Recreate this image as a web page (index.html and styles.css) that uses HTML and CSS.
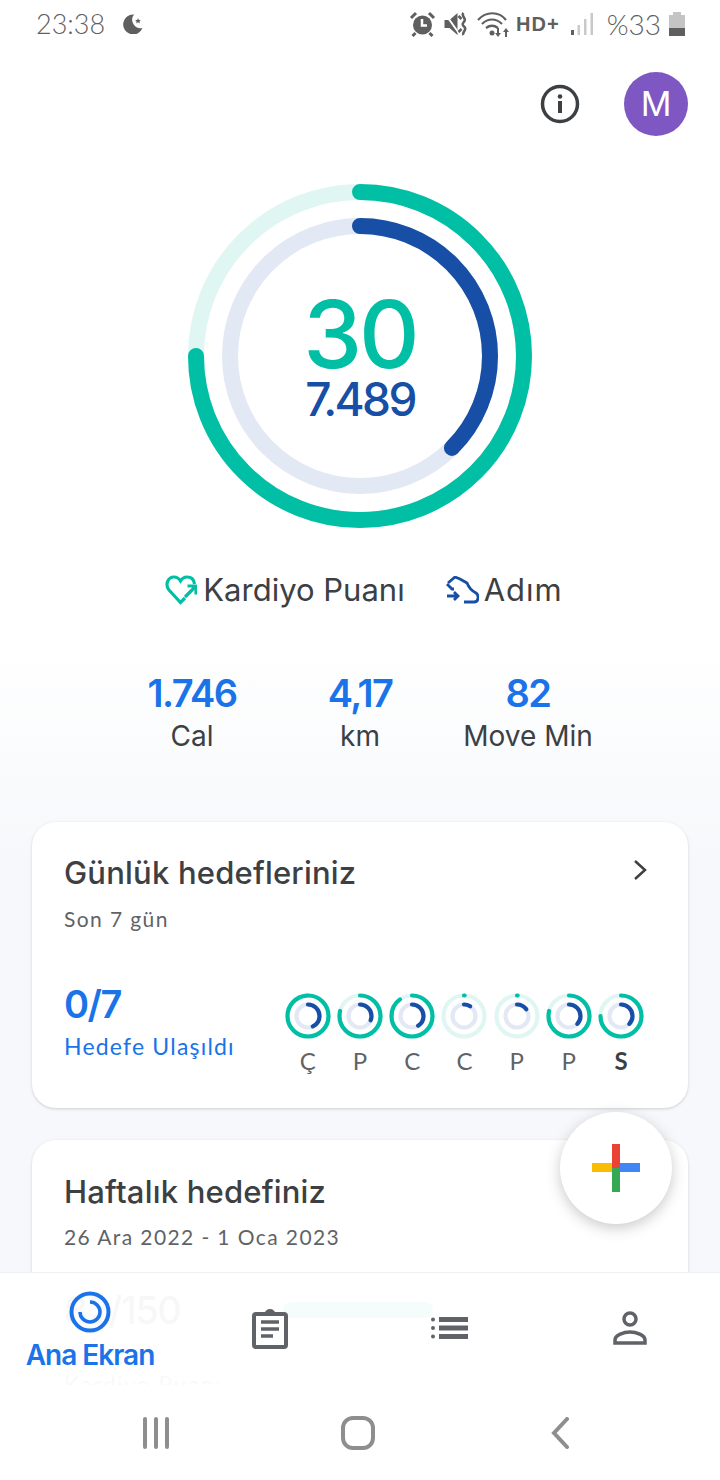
FILE: index.html
```html
<!DOCTYPE html>
<html lang="tr">
<head>
<meta charset="utf-8">
<title>Ana Ekran</title>
<link rel="stylesheet" href="styles.css">
</head>
<body>
<div class="phone">
  <header class="status">
    <div class="status-left">
      <span class="clock">23:38</span>
      <svg class="moon" viewBox="0 0 20 20"><path d="M11 .5A10 10 0 1 0 19.500 14A8.500 8.500 0 0 1 11 .5z"/><path d="M15 4l.9 1.900 2 .2-1.500 1.300.5 2-1.900-1.100-1.800 1.100.4-2-1.500-1.300 2.100-.2z"/></svg>
    </div>
    <div class="status-right">
      <svg class="st-alarm" viewBox="0 0 26 26"><circle cx="13" cy="14" r="9.500"/><path class="cut" d="M12.500 8v6.500h5"/><path class="ear" d="M1.500 7l5-5M24.500 7l-5-5M6 22l-3 3M20 22l3 3"/></svg>
      <svg class="st-mute" viewBox="0 0 26 24"><path d="M1 8h5l8-7v22l-8-7H1z"/><path class="cut" d="M1 1l15 21"/><path class="wave" d="M20 1c-3 3 3 5 1 8s-3 3 0 6-3 5-1 8"/><path class="wave" d="M15 4l3 3M15 20l3-3"/></svg>
      <svg class="st-wifi" viewBox="0 0 32 26"><path class="wave" d="M1 9c8-9 21-9 28 0M5 13c6-6 14-6 20 0M9 17c4-3 8-3 12 0"/><circle cx="15" cy="22" r="2.500"/><path d="M20 17h2v5h2l-3 4-3-4h2zM28 26h2v-5h2l-3-4-3 4h2z"/></svg>
      <span class="hd">HD+</span>
      <svg class="st-signal" viewBox="0 0 22 22"><rect class="on" x="0" y="17" width="3" height="5"/><rect x="6.500" y="12" width="2.500" height="10"/><rect x="13" y="6" width="2.500" height="16"/><rect x="19.500" y="0" width="2.500" height="22"/></svg>
      <span class="pct">%33</span>
      <svg class="st-batt" viewBox="0 0 16 24"><rect class="b-top" x="4" y="0" width="8" height="3"/><rect class="b-body" x="0" y="3" width="16" height="21"/><rect x="0" y="16" width="16" height="8"/></svg>
    </div>
  </header>

  <div class="actions">
    <svg class="info" viewBox="0 0 40 40"><circle class="info-ring" cx="20" cy="20" r="17.500"/><circle cx="20" cy="12.500" r="2.300"/><rect x="18" y="17" width="4" height="12"/></svg>
    <div class="avatar">M</div>
  </div>

  <div class="ring">
    <svg class="ring-svg" viewBox="0 0 344 344">
      <circle class="track-teal" cx="172" cy="172" r="164"/>
      <circle class="track-blue" cx="172" cy="172" r="130"/>
      <circle class="arc-teal" cx="172" cy="172" r="164" pathLength="100" stroke-dasharray="75 100"/>
      <circle class="arc-blue" cx="172" cy="172" r="130" pathLength="100" stroke-dasharray="37.500 100"/>
    </svg>
    <div class="ring-text">
      <div class="ring-main">30</div>
      <div class="ring-sub">7.489</div>
    </div>
  </div>

  <div class="legend">
    <div class="legend-item">
      <svg class="leg-heart" viewBox="0 0 32 30"><path d="M20 23L15.500 27.500 4 15C0 10 2.500 2 9 2c3 0 5 1.500 6.500 4C17 3.500 19 2 22 2c4 0 7 2.500 7.500 7"/><path d="M20 22l9.500-9.500M22.500 11h8.500v8.500"/></svg>
      <span>Kardiyo Puanı</span>
    </div>
    <div class="legend-item legend-steps">
      <svg class="leg-shoe" viewBox="0 0 33 28"><path d="M2 7L9 1l5 2 7 4c2 5 5 8 9 10 3 2 3 9-2 9H18"/><path d="M1 8l5 5h2"/><path d="M1 20h11M8 16l4 4-4 4"/></svg>
      <span class="steps">Adım</span>
    </div>
  </div>

  <div class="stats">
    <div class="stat"><div class="stat-num">1.746</div><div class="stat-label">Cal</div></div>
    <div class="stat"><div class="stat-num">4,17</div><div class="stat-label">km</div></div>
    <div class="stat"><div class="stat-num">82</div><div class="stat-label">Move Min</div></div>
  </div>

  <section class="card">
    <div class="card-head">
      <h2>Günlük hedefleriniz</h2>
      <svg class="chev" viewBox="0 0 14 22"><path d="M2 2l10 9-10 9"/></svg>
    </div>
    <p class="hand muted">Son 7 gün</p>
    <div class="daily">
      <div class="daily-score">
        <div class="score">0/7</div>
        <div class="hand blue">Hedefe Ulaşıldı</div>
      </div>
      <div class="week">
        <div class="day"><svg class="mini" viewBox="0 0 46 46"><circle class="mt" cx="23" cy="23" r="20.500"/><circle class="mb" cx="23" cy="23" r="11.500"/><circle class="ma" cx="23" cy="23" r="20.500" pathLength="100" stroke-dasharray="99 100"/><circle class="mc" cx="23" cy="23" r="11.500" pathLength="100" stroke-dasharray="43 100"/></svg><span>Ç</span></div>
        <div class="day"><svg class="mini" viewBox="0 0 46 46"><circle class="mt" cx="23" cy="23" r="20.500"/><circle class="mb" cx="23" cy="23" r="11.500"/><circle class="ma" cx="23" cy="23" r="20.500" pathLength="100" stroke-dasharray="79 100"/><circle class="mc" cx="23" cy="23" r="11.500" pathLength="100" stroke-dasharray="31 100"/></svg><span>P</span></div>
        <div class="day"><svg class="mini" viewBox="0 0 46 46"><circle class="mt" cx="23" cy="23" r="20.500"/><circle class="mb" cx="23" cy="23" r="11.500"/><circle class="ma" cx="23" cy="23" r="20.500" pathLength="100" stroke-dasharray="90 100"/><circle class="mc" cx="23" cy="23" r="11.500" pathLength="100" stroke-dasharray="41 100"/></svg><span>C</span></div>
        <div class="day"><svg class="mini" viewBox="0 0 46 46"><circle class="mt" cx="23" cy="23" r="20.500"/><circle class="mb" cx="23" cy="23" r="11.500"/><circle class="ma" cx="23" cy="23" r="20.500" pathLength="100" stroke-dasharray="0.500 100"/><circle class="mc" cx="23" cy="23" r="11.500" pathLength="100" stroke-dasharray="9 100"/></svg><span>C</span></div>
        <div class="day"><svg class="mini" viewBox="0 0 46 46"><circle class="mt" cx="23" cy="23" r="20.500"/><circle class="mb" cx="23" cy="23" r="11.500"/><circle class="ma" cx="23" cy="23" r="20.500" pathLength="100" stroke-dasharray="0.500 100"/><circle class="mc" cx="23" cy="23" r="11.500" pathLength="100" stroke-dasharray="15 100"/></svg><span>P</span></div>
        <div class="day"><svg class="mini" viewBox="0 0 46 46"><circle class="mt" cx="23" cy="23" r="20.500"/><circle class="mb" cx="23" cy="23" r="11.500"/><circle class="ma" cx="23" cy="23" r="20.500" pathLength="100" stroke-dasharray="79 100"/><circle class="mc" cx="23" cy="23" r="11.500" pathLength="100" stroke-dasharray="37 100"/></svg><span>P</span></div>
        <div class="day today"><svg class="mini" viewBox="0 0 46 46"><circle class="mt" cx="23" cy="23" r="20.500"/><circle class="mb" cx="23" cy="23" r="11.500"/><circle class="ma" cx="23" cy="23" r="20.500" pathLength="100" stroke-dasharray="75 100"/><circle class="mc" cx="23" cy="23" r="11.500" pathLength="100" stroke-dasharray="37 100"/></svg><span>S</span></div>
      </div>
    </div>
  </section>

  <section class="card card-week">
    <h2>Haftalık hedefiniz</h2>
    <p class="hand muted">26 Ara 2022 - 1 Oca 2023</p>
    <div class="weekly">
      <div class="score score-week">82/150</div>
      <div class="weekly-bar"></div>
    </div>
    <p class="hand muted week-note">Kardiyo Puanı</p>
  </section>

  <button class="fab" type="button" aria-label="Ekle">
    <svg viewBox="0 0 48 48">
      <rect class="p-y" x="0" y="19" width="24" height="9"/>
      <rect class="p-b" x="24" y="19" width="24" height="9"/>
      <rect class="p-g" x="20" y="24" width="8" height="24"/>
      <rect class="p-r" x="20" y="0" width="8" height="24"/>
    </svg>
  </button>

  <div class="bottom">
    <nav class="tabs">
      <div class="tab tab-active">
        <svg class="tab-home" viewBox="0 0 42 42"><circle class="t-o" cx="21" cy="21" r="18.500"/><path class="t-i" d="M21 11a10 10 0 1 1-10 10"/></svg>
        <span class="tab-label">Ana Ekran</span>
      </div>
      <div class="tab">
        <svg class="tab-clip" viewBox="0 0 38 42"><path class="c-b" d="M5 7h28a2 2 0 0 1 2 2v29a2 2 0 0 1-2 2H5a2 2 0 0 1-2-2V9a2 2 0 0 1 2-2z"/><path class="c-t" d="M13 7c1-3 3-5 6-5s5 2 6 5z"/><path class="c-l" d="M10 15h18M10 22h18M10 29h12"/></svg>
      </div>
      <div class="tab">
        <svg class="tab-list" viewBox="0 0 38 22"><circle cx="2" cy="2.500" r="2"/><circle cx="2" cy="11" r="2"/><circle cx="2" cy="19.500" r="2"/><rect x="8" y="0" width="29" height="5"/><rect x="8" y="8.500" width="29" height="5"/><rect x="8" y="17" width="29" height="5"/></svg>
      </div>
      <div class="tab">
        <svg class="tab-user" viewBox="0 0 34 34"><circle class="u" cx="17" cy="8" r="6"/><path class="u" d="M2 32v-3c0-5 9-8 15-8s15 3 15 8v3z"/></svg>
      </div>
    </nav>
    <div class="sysnav">
      <svg class="sys-bars" viewBox="0 0 30 32"><path d="M4 2v28M15 2v28M26 2v28"/></svg>
      <svg class="sys-home" viewBox="0 0 34 34"><rect x="2" y="2" width="30" height="30" rx="10"/></svg>
      <svg class="sys-back" viewBox="0 0 20 32"><path d="M16 2L3 16l13 14"/></svg>
    </div>
  </div>
</div>
</body>
</html>
```

FILE: styles.css
```css
* { box-sizing: border-box; }
html, body { margin: 0; padding: 0; }
body { width: 720px; height: 1480px; overflow: hidden; font-family: "Inter", "Roboto", sans-serif; color: #3c4043; }

.phone {
  position: relative;
  width: 720px;
  height: 1480px;
  overflow: hidden;
  background: linear-gradient(#fff 0, #fff 640px, #f6f8fb 860px, #f6f8fb 100%);
}

/* status bar */
.status { height: 48px; padding: 0 35px 0 36px; display: flex; justify-content: space-between; align-items: center; color: #5f5f5f; }
.status-left, .status-right { display: flex; align-items: center; }
.clock { font: 300 27px/48px "Lato", sans-serif; }
.moon { width: 20px; height: 20px; margin-left: 18px; fill: #5f5f5f; }
.status svg { flex: none; }
.st-alarm { width: 27px; height: 26px; fill: #5f5f5f; }
.st-alarm .cut { fill: none; stroke: #fff; stroke-width: 2.500; }
.st-alarm .ear { fill: none; stroke: #5f5f5f; stroke-width: 3; }
.st-mute { width: 27px; height: 24px; margin-left: 7px; fill: #5f5f5f; }
.st-mute .cut { stroke: #fff; stroke-width: 2; }
.st-mute .wave { fill: none; stroke: #5f5f5f; stroke-width: 2.500; }
.st-wifi { width: 32px; height: 26px; margin-left: 7px; fill: #5f5f5f; }
.st-wifi .wave { fill: none; stroke: #5f5f5f; stroke-width: 2.200; }
.hd { font: 700 20px/24px "Liberation Sans", sans-serif; letter-spacing: 1px; margin-left: 7px; }
.st-signal { width: 22px; height: 22px; margin-left: 11px; fill: #c9c9c9; }
.st-signal .on { fill: #5f5f5f; }
.pct { font: 300 28px/48px "Lato", sans-serif; margin-left: 14px; }
.st-batt { width: 16px; height: 24px; margin-left: 8px; fill: #5f5f5f; }
.st-batt .b-top, .st-batt .b-body { fill: #c4c4c4; }

/* top actions */
.actions { display: flex; justify-content: flex-end; align-items: center; gap: 44px; padding: 24px 32px 0 0; }
.info { width: 40px; height: 40px; fill: #3c4043; }
.info-ring { fill: none; stroke: #3c4043; stroke-width: 3.500; }
.avatar { width: 64px; height: 64px; border-radius: 50%; background: #7e57c2; color: #fff; font-size: 34px; line-height: 64px; text-align: center; }

/* activity ring */
.ring { position: relative; width: 344px; height: 344px; margin: 48px auto 0; }
.ring-svg { display: block; width: 344px; height: 344px; }
.ring-svg circle { fill: none; stroke-width: 16; }
.track-teal { stroke: #e0f6f2; }
.track-blue { stroke: #e2e8f4; }
.arc-teal, .arc-blue { stroke-linecap: round; transform: rotate(-90deg); transform-origin: 172px 172px; }
.arc-teal { stroke: #00bfa5; }
.arc-blue { stroke: #174ea6; }
.ring-text { position: absolute; inset: 0; display: flex; flex-direction: column; align-items: center; justify-content: center; padding-top: 8px; }
.ring-main { font: 500 94px/78px "Inter", sans-serif; color: #00bfa5; letter-spacing: -3px; }
.ring-sub { font: 550 46px/52px "Inter", sans-serif; color: #174ea6; letter-spacing: -2.600px; }

/* legend */
.legend { display: flex; justify-content: center; gap: 41px; margin-top: 42px; padding-left: 8px; font-size: 31px; line-height: 40px; }
.legend-item { display: flex; align-items: center; gap: 6px; }
.legend-steps { gap: 5px; }
.steps { letter-spacing: 1px; }
.leg-heart { width: 32px; height: 30px; fill: none; stroke: #00bfa5; stroke-width: 3.200; }
.leg-shoe { width: 33px; height: 28px; fill: none; stroke: #174ea6; stroke-width: 2.800; }

/* summary numbers */
.stats { display: grid; grid-template-columns: repeat(3, 168px); justify-content: center; margin-top: 60px; text-align: center; }
.stat-num { font: 600 38px/46px "Inter", sans-serif; color: #1a73e8; letter-spacing: -1.500px; }
.stat-label { font-size: 28px; line-height: 40px; }

/* cards */
.card { margin: 66px 32px 0; background: #fff; border-radius: 24px; box-shadow: 0 1px 3px rgba(60, 64, 67, .22); padding: 31px 32px 0; height: 286px; }
.card-week { margin-top: 32px; height: 340px; padding-top: 32px; }
.card h2 { margin: 0; font-size: 31px; line-height: 40px; font-weight: 450; letter-spacing: .2px; }
.card-head { display: flex; justify-content: space-between; align-items: flex-start; }
.chev { width: 14px; height: 22px; margin: 6px 9px 0 0; fill: none; stroke: #3c4043; stroke-width: 2.500; }
.hand { margin: 0; font: 400 23px/32px "Lato", sans-serif; letter-spacing: 1.200px; }
.muted { color: #5f6368; margin-top: 10px; font-size: 21px; letter-spacing: 1.400px; }
.card-week .muted { margin-top: 9px; }
.card-week .week-note { margin-top: 36px; font-size: 23px; }
.blue { color: #1a73e8; margin-top: 4px; }
.daily { display: flex; justify-content: space-between; margin-top: 39px; }
.daily-score { padding-top: 8px; }
.score { font: 600 38px/44px "Inter", sans-serif; color: #1a73e8; letter-spacing: -1.500px; }
.week { display: flex; gap: 6.200px; margin-right: 12px; margin-top: 19px; }
.day { width: 46px; display: flex; flex-direction: column; align-items: center; color: #5f6368; font: 400 24px/30px "Lato", sans-serif; }
.today { color: #3c4043; font-weight: 700; }
.mini { display: block; width: 46px; height: 46px; margin-bottom: 7px; }
.mini circle { fill: none; stroke-width: 4.200; }
.mt { stroke: #e0f6f2; }
.mb { stroke: #e2e8f4; }
.ma, .mc { transform: rotate(-90deg); transform-origin: 23px 23px; stroke-linecap: round; }
.ma { stroke: #00bfa5; }
.mc { stroke: #174ea6; }
.weekly { display: flex; align-items: center; gap: 103px; margin-top: 35px; }
.weekly-bar { width: 150px; height: 16px; border-radius: 8px; background: #00bfa5; }
.score-week { font-weight: 500; color: #3c4043; }

/* floating add button */
.fab { position: absolute; left: 560px; top: 1112px; width: 112px; height: 112px; padding: 32px; border: 0; border-radius: 50%; background: #fff; box-shadow: 0 4px 14px rgba(60, 64, 67, .28); }
.fab svg { display: block; width: 48px; height: 48px; }
.p-y { fill: #fbbc04; }
.p-b { fill: #4285f4; }
.p-g { fill: #34a853; }
.p-r { fill: #ea4335; }

/* bottom navigation */
.bottom { position: absolute; left: 0; right: 0; bottom: 0; }
.tabs { height: 113px; display: grid; grid-template-columns: repeat(4, 180px); background: rgba(255, 255, 255, .96); border-top: 1px solid #eef0f2; }
.tab { display: flex; flex-direction: column; align-items: center; justify-content: center; padding-bottom: 3px; }
.tab-active { color: #1a73e8; font: 600 28px/36px "Inter", sans-serif; letter-spacing: -1px; justify-content: flex-start; padding: 18px 0 0; white-space: nowrap; }
.tab-label { margin-top: 4px; }
.tab-home { width: 42px; height: 42px; }
.t-o, .t-i { fill: none; stroke: #1a73e8; }
.t-o { stroke-width: 4; }
.t-i { stroke-width: 3.500; }
.tab-clip { width: 38px; height: 42px; }
.c-b { fill: none; stroke: #5f6368; stroke-width: 4; }
.c-t { fill: #5f6368; }
.c-l { fill: none; stroke: #5f6368; stroke-width: 3.500; }
.tab-list { width: 38px; height: 22px; fill: #5f6368; }
.tab-user { width: 34px; height: 34px; }
.u { fill: none; stroke: #5f6368; stroke-width: 3.500; }
.sysnav { height: 95px; background: #fff; display: flex; align-items: center; justify-content: center; gap: 170px; padding-right: 8px; }
.sysnav svg { fill: none; stroke: #8e8e8e; stroke-width: 4; }
.sys-bars { width: 30px; height: 32px; stroke-linecap: round; }
.sys-home { width: 34px; height: 34px; }
.sys-back { width: 20px; height: 32px; stroke-linecap: round; margin-left: 6px; }
```
